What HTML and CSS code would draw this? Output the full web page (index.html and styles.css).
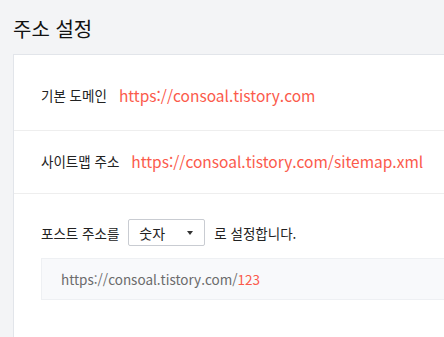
FILE: index.html
```
<!DOCTYPE html>
<html lang="ko">
<head>
<meta charset="utf-8">
<link rel="stylesheet" href="styles.css">
</head>
<body>
<h1 class="title">주소 설정</h1>
<div class="card">
  <div class="row row-first">
    <span class="label">기본 도메인</span>
    <span class="url">https://consoal.tistory.com</span>
  </div>
  <div class="row row-second">
    <span class="label">사이트맵 주소</span>
    <span class="url">https://consoal.tistory.com/sitemap.xml</span>
  </div>
  <div class="row row-third">
    <div class="post-line">
      <span class="label-plain">포스트 주소를</span>
      <div class="select"><span class="select-text">숫자</span><span class="caret"></span></div>
      <span class="label-plain after">로 설정합니다.</span>
    </div>
    <div class="preview">https://consoal.tistory.com/<span class="num">123</span></div>
  </div>
</div>
</body>
</html>
```
FILE: styles.css
```
html, body {
  margin: 0;
  padding: 0;
  background: #f3f4f6;
  overflow: hidden;
  width: 444px;
  height: 337px;
}
body {
  font-family: "Noto Sans CJK KR", "Noto Sans", sans-serif;
  color: #222;
}
.title {
  margin: 0;
  padding: 15px 0 0 13px;
  height: 54px;
  box-sizing: border-box;
  font-size: 20px;
  font-weight: 400;
  line-height: 28px;
  color: #111;
}
.card {
  margin-left: 13px;
  height: 283px;
  box-sizing: border-box;
  background: #fff;
  border: 1px solid #e2e5ea;
  border-right: none;
  border-bottom: none;
  overflow: hidden;
}
.row {
  display: flex;
  align-items: center;
  padding-left: 27px;
  border-bottom: 1px solid #eeeeee;
  white-space: nowrap;
}
.row-first {
  padding-top: 28px;
  padding-bottom: 23px;
  line-height: 24px;
}
.row-second {
  padding-top: 18px;
  padding-bottom: 20px;
  line-height: 24px;
}
.row-third {
  display: block;
  border-bottom: none;
  padding-top: 25px;
}
.label {
  font-size: 13.5px;
  color: #222;
  margin-right: 12px;
}
.url {
  font-size: 15.5px;
  color: #fb5a4b;
}
.post-line {
  display: flex;
  align-items: center;
  font-size: 13.5px;
}
.label-plain {
  color: #222;
}
.select {
  margin-left: 9px;
  width: 77px;
  height: 27px;
  box-sizing: border-box;
  border: 1px solid #c9ccd2;
  border-radius: 2px;
  display: flex;
  align-items: center;
  justify-content: space-between;
  padding: 0 11px 0 10px;
  font-size: 14px;
  color: #222;
}
.caret {
  width: 0;
  height: 0;
  border-left: 3.5px solid transparent;
  border-right: 3.5px solid transparent;
  border-top: 4px solid #333;
}
.after {
  margin-left: 9px;
}
.preview {
  margin-top: 12px;
  height: 42px;
  box-sizing: border-box;
  background: #f8f9fb;
  border: 1px solid #eef0f3;
  border-right: none;
  padding-left: 19px;
  display: flex;
  align-items: center;
  font-size: 13.5px;
  color: #6b6b6b;
}
.num {
  color: #fb5a4b;
}
```
